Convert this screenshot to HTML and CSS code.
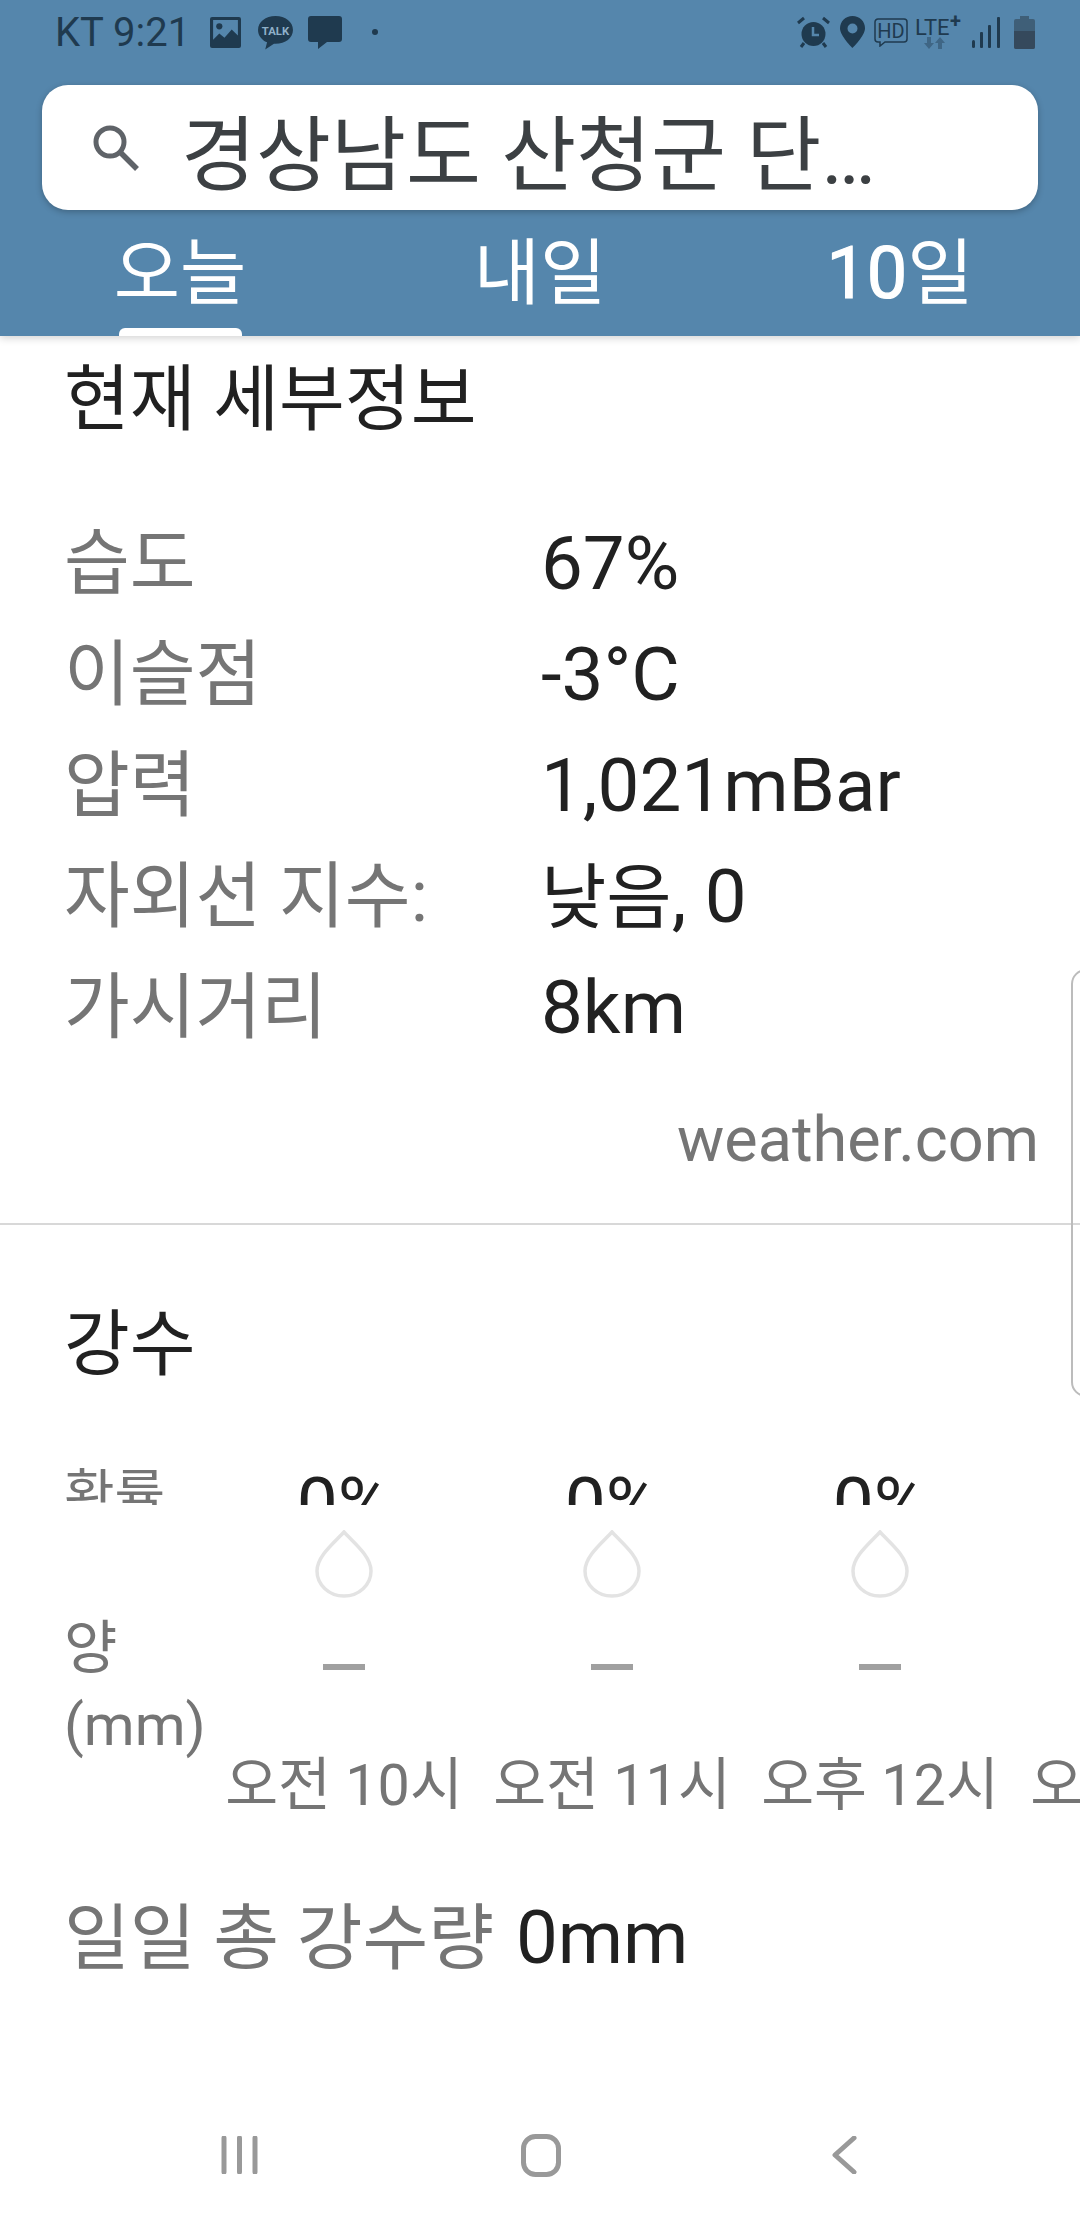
FILE: index.html
```html
<!DOCTYPE html>
<html lang="ko">
  <head>
    <meta charset="utf-8" />
    <title>날씨</title>
    <link rel="stylesheet" href="styles.css">
  </head>
  <body>
    <div id="screen">
      <header class="top">
        <div class="status">
          <span class="carrier">KT 9:21</span>
          <svg class="ic-image" viewBox="0 0 30 30"><path fill="#1f3a4f" fill-rule="evenodd" d="M2 0h26a2 2 0 0 1 2 2v26a2 2 0 0 1-2 2H2a2 2 0 0 1-2-2V2a2 2 0 0 1 2-2zM3 3v19l6-6 5 4 7-8 6 6V3z"/><circle cx="9" cy="9" r="3" fill="#1f3a4f"/></svg>
          <svg class="ic-talk" viewBox="0 0 36 34"><path fill="#1f3a4f" d="M18 1c9.600 0 17 5.800 17 13.500S27.600 28 18 28h-1.500L8 33.500l1.800-7C4.500 24.300 1 19.800 1 14.500 1 6.800 8.400 1 18 1z"/><text x="18" y="19" class="talk-txt" text-anchor="middle">TALK</text></svg>
          <svg class="ic-msg" viewBox="0 0 34 33"><path fill="#1f3a4f" d="M3 0h28a3 3 0 0 1 3 3v20a3 3 0 0 1-3 3H19l-9 7v-7H3a3 3 0 0 1-3-3V3a3 3 0 0 1 3-3z"/></svg>
          <span class="dot"></span>
          <div class="status-right">
            <svg class="ic-alarm" viewBox="0 0 33 33"><circle cx="16.500" cy="18" r="12" fill="#1f3a4f"/><path d="M16 11v8h6" fill="none" stroke="#5586ac" stroke-width="2.500"/><path d="M1 7l6-5M32 7l-6-5M7 27l-3 4M26 27l3 4" stroke="#1f3a4f" stroke-width="3" fill="none"/></svg>
            <svg class="ic-pin" viewBox="0 0 25 32"><path fill="#1f3a4f" fill-rule="evenodd" d="M12.500 0C19.500 0 25 5.400 25 12.300 25 20 12.500 32 12.500 32S0 20 0 12.300C0 5.400 5.500 0 12.500 0zm0 7.500a5 5 0 1 0 0 10 5 5 0 0 0 0-10z"/></svg>
            <svg class="ic-hd" viewBox="0 0 34 29"><path fill="none" stroke="#1f3a4f" stroke-width="1.500" d="M4 1h26a3 3 0 0 1 3 3v17a3 3 0 0 1-3 3H11l-5 4v-4H4a3 3 0 0 1-3-3V4a3 3 0 0 1 3-3z"/><text x="17" y="19.500" class="hd-txt" text-anchor="middle">HD</text></svg>
            <svg class="ic-lte" viewBox="0 0 50 34"><text x="0" y="20" class="lte-txt">LTE</text><text x="35" y="13" class="lte-plus">+</text><path fill="#3f6685" d="M9 22h4v6h3l-5 6-5-6h3zM20 34h4v-6h3l-5-6-5 6h3z" transform="translate(3)"/></svg>
            <svg class="ic-signal" viewBox="0 0 28 32"><rect x="0" y="24" width="3" height="8" rx="1.500" fill="#1f3a4f"/><rect x="8" y="16" width="3" height="16" rx="1" fill="#1f3a4f"/><rect x="16" y="9" width="3" height="23" rx="1" fill="#1f3a4f"/><rect x="25" y="1" width="3" height="31" rx="1" fill="#1f3a4f"/></svg>
            <svg class="ic-batt" viewBox="0 0 21 33"><path fill="#3f5f78" d="M6 0h9v3h4a2 2 0 0 1 2 2v26a2 2 0 0 1-2 2H2a2 2 0 0 1-2-2V5a2 2 0 0 1 2-2h4z"/><path fill="#35495c" d="M0 15h21v16a2 2 0 0 1-2 2H2a2 2 0 0 1-2-2z"/></svg>
          </div>
        </div>

        <div class="search">
          <svg class="ic-search" viewBox="0 0 46 46"><circle cx="17" cy="17" r="14" fill="none" stroke="#5f6368" stroke-width="5"/><path d="M27 27l17 17" stroke="#5f6368" stroke-width="5.500" fill="none"/></svg>
          <span class="search-text">경상남도 산청군 단…</span>
        </div>

        <nav class="tabs">
          <div class="tab active">오늘</div>
          <div class="tab">내일</div>
          <div class="tab"><span class="tab-num">10</span>일</div>
        </nav>
      </header>

      <main class="content">
        <h2 class="heading">현재 세부정보</h2>
        <div class="details">
          <div class="label">습도</div><div class="value">67%</div>
          <div class="label">이슬점</div><div class="value">-3°C</div>
          <div class="label">압력</div><div class="value">1,021mBar</div>
          <div class="label">자외선 지수:</div><div class="value"><span class="value-ko">낮음</span>, 0</div>
          <div class="label">가시거리</div><div class="value">8km</div>
        </div>
        <div class="source">weather.com</div>
        <hr class="divider" />

        <h2 class="heading heading-precip">강수</h2>
        <div class="precip">
          <div class="precip-labels">
            <div class="chance-label">확률</div>
            <div class="amount-label">양<br />(mm)</div>
          </div>
          <div class="hour">
            <div class="chance">0%</div>
            <svg class="drop" viewBox="0 0 58 68"><path fill="none" stroke="#e3e3e3" stroke-width="3.500" d="M29 2C38 12 56 26 56 41A27 25 0 0 1 2 41C2 26 20 12 29 2z"/></svg>
            <div class="dash"></div>
            <div class="time">오전 10시</div>
          </div>
          <div class="hour">
            <div class="chance">0%</div>
            <svg class="drop" viewBox="0 0 58 68"><path fill="none" stroke="#e3e3e3" stroke-width="3.500" d="M29 2C38 12 56 26 56 41A27 25 0 0 1 2 41C2 26 20 12 29 2z"/></svg>
            <div class="dash"></div>
            <div class="time">오전 11시</div>
          </div>
          <div class="hour">
            <div class="chance">0%</div>
            <svg class="drop" viewBox="0 0 58 68"><path fill="none" stroke="#e3e3e3" stroke-width="3.500" d="M29 2C38 12 56 26 56 41A27 25 0 0 1 2 41C2 26 20 12 29 2z"/></svg>
            <div class="dash"></div>
            <div class="time">오후 12시</div>
          </div>
          <div class="hour hour-last">
            <div class="chance">0%</div>
            <svg class="drop" viewBox="0 0 58 68"><path fill="none" stroke="#e3e3e3" stroke-width="3.500" d="M29 2C38 12 56 26 56 41A27 25 0 0 1 2 41C2 26 20 12 29 2z"/></svg>
            <div class="dash"></div>
            <div class="time">오후 1시</div>
          </div>
        </div>
        <div class="total"><span class="label">일일 총 강수량</span> <span class="value">0mm</span></div>
      </main>

      <footer class="navbar">
        <svg class="nav-recents" viewBox="0 0 37 38"><path d="M3 2v34M18.500 2v34M34 2v34" fill="none" stroke="#999" stroke-width="5" stroke-linecap="round"/></svg>
        <svg class="nav-home" viewBox="0 0 40 43"><rect x="2.500" y="2.500" width="35" height="38" rx="12" fill="none" stroke="#999" stroke-width="5"/></svg>
        <svg class="nav-back" viewBox="0 0 33 38"><path d="M30 2L11 19l0 0 19 17" fill="none" stroke="#999" stroke-width="5" stroke-linecap="round" stroke-linejoin="round"/></svg>
      </footer>

      <div class="edge-handle"></div>
    </div>
  </body>
</html>
```

FILE: styles.css
```css
body {
  margin: 0;
  background-color: #fff;
  font-family: Roboto, 'Noto Sans CJK KR', sans-serif;
  color: #212121;
}
#screen {
  position: relative;
  width: 1080px;
  height: 2220px;
  overflow: hidden;
  display: flex;
  flex-direction: column;
}

/* header */
.top {
  height: 336px;
  flex: none;
  background-color: #5586ac;
  box-shadow: 0 2px 8px rgba(0, 0, 0, 0.18);
  position: relative;
  z-index: 1;
}
.status {
  height: 64px;
  padding: 0 45px 21px 55px;
  display: flex;
  align-items: center;
  color: #1f3a4f;
}
.carrier {
  font-size: 40px;
  width: 155px;
  flex: none;
}
.status svg {
  display: block;
  flex: none;
}
.ic-image { width: 31px; height: 31px; }
.ic-talk { width: 37px; height: 35px; margin-left: 16px; }
.ic-msg { width: 34px; height: 33px; margin-left: 14px; }
.talk-txt { font: bold 11px Roboto, sans-serif; fill: #8fb0c9; }
.dot {
  width: 6px;
  height: 6px;
  border-radius: 50%;
  background-color: #1f3a4f;
  margin-left: 30px;
}
.status-right {
  margin-left: auto;
  display: flex;
  align-items: center;
}
.ic-alarm { width: 33px; height: 33px; }
.ic-pin { width: 25px; height: 32px; margin-left: 10px; }
.ic-hd { width: 34px; height: 29px; margin-left: 9px; }
.hd-txt { font: 20px Roboto, sans-serif; fill: #1f3a4f; }
.ic-lte { width: 50px; height: 34px; margin-left: 7px; }
.lte-txt { font: 22px Roboto, sans-serif; fill: #1f3a4f; }
.lte-plus { font: bold 20px Roboto, sans-serif; fill: #1f3a4f; }
.ic-signal { width: 28px; height: 32px; margin-left: 7px; }
.ic-batt { width: 21px; height: 33px; margin-left: 14px; }

.search {
  height: 125px;
  margin: 0 42px 0 42px;
  padding-left: 51px;
  display: flex;
  align-items: center;
  background-color: #fff;
  border-radius: 26px;
  box-shadow: 0 2px 6px rgba(0, 0, 0, 0.25);
}
.ic-search {
  width: 46px;
  height: 46px;
  flex: none;
}
.search-text {
  margin-left: 42px;
  font-size: 81.500px;
  color: #3c4043;
  white-space: nowrap;
}
.tabs {
  display: flex;
  height: 126px;
}
.tab {
  flex: 1;
  position: relative;
  text-align: center;
  font-size: 72px;
  line-height: 128px;
  color: #fff;
}
.tab-num { -webkit-text-stroke: 1.200px #fff; }
.tab.active::after {
  content: '';
  position: absolute;
  left: 119px;
  bottom: 0;
  width: 123px;
  height: 8px;
  background-color: #fff;
  border-radius: 6px 6px 0 0;
}

/* content */
.content {
  flex: 1;
  min-height: 0;
  overflow: hidden;
}
.heading {
  margin: 14px 0 0;
  padding-left: 64px;
  font-size: 71.500px;
  font-weight: 400;
  line-height: 100px;
}
.details {
  margin-top: 58px;
  padding-left: 64px;
  display: grid;
  grid-template-columns: 477px 1fr;
  grid-auto-rows: 111px;
  font-size: 71.500px;
  line-height: 111px;
}
.label { color: #757575; }
.value { color: #212121; font-size: 74.500px; }
.value-ko { font-size: 71px; }
.source {
  margin-top: 37px;
  padding-right: 41px;
  text-align: right;
  font-size: 63px;
  line-height: 80px;
  color: #757575;
}
.divider {
  margin: 43px 0 0;
  border: 0;
  height: 2px;
  background-color: #d8d8d8;
}
.heading-precip { margin-top: 70px; }

.precip {
  margin-top: 66px;
  display: flex;
  white-space: nowrap;
}
.precip-labels {
  width: 210px;
  flex: none;
  padding-left: 64px;
  box-sizing: border-box;
  color: #757575;
}
.chance-label {
  height: 44px;
  overflow: hidden;
  font-size: 55px;
  line-height: 68px;
}
.amount-label {
  margin-top: 105px;
  font-size: 58px;
  line-height: 77px;
}
.hour {
  width: 268px;
  flex: none;
  display: flex;
  flex-direction: column;
  align-items: center;
}
.hour-last .time {
  margin-right: 30px;
}
.chance {
  height: 44px;
  overflow: hidden;
  font-size: 73px;
  line-height: 86px;
}
.drop {
  width: 58px;
  height: 68px;
  margin-top: 25px;
  display: block;
}
.dash {
  width: 42px;
  height: 6px;
  margin-top: 66px;
  background-color: #a0a0a0;
}
.time {
  margin-top: 76px;
  font-size: 57.500px;
  line-height: 80px;
  color: #757575;
}
.total {
  margin-top: 67px;
  padding-left: 64px;
  font-size: 71.500px;
  line-height: 90px;
  white-space: nowrap;
}
.total .label { margin-right: 4px; }

/* bottom */
.navbar {
  height: 130px;
  flex: none;
  padding-left: 221px;
  display: flex;
  align-items: center;
  gap: 263px;
}
.nav-recents { width: 37px; height: 38px; }
.nav-home { width: 40px; height: 43px; }
.nav-back { width: 33px; height: 38px; }

.edge-handle {
  position: absolute;
  left: 1071px;
  top: 969px;
  width: 30px;
  height: 428px;
  box-sizing: border-box;
  border: 2px solid #bcbcbc;
  border-radius: 16px;
}
```
